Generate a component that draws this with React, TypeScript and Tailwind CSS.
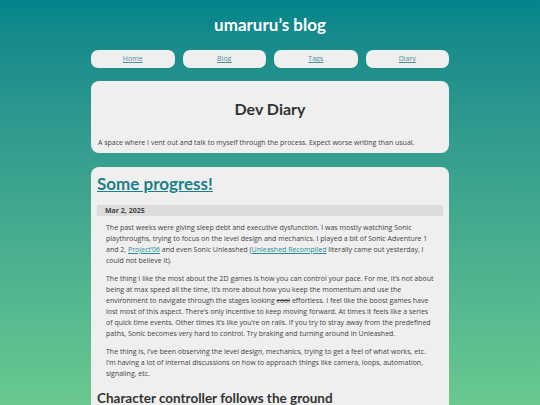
export default function App() {
  const navItems = ['Home', 'Blog', 'Tags', 'Diary'];

  return (
    <div className="min-h-screen bg-fixed bg-gradient-to-b from-[#02848b] to-[#69c98f] font-['Open_Sans',sans-serif] text-[#333] pb-10">
      <header className="pt-[13px] text-center font-['Lato',sans-serif]">
        <h1 className="text-[17px] leading-[24px] font-bold text-white">umaruru’s blog</h1>
      </header>

      <nav className="mx-auto mt-[13px] flex w-[358px] gap-2">
        {navItems.map((item) => (
          <a
            key={item}
            href="#"
            className="flex h-[18px] flex-1 items-center justify-center rounded-[7px] bg-[#efefef] pt-px text-[7px] text-[#4d9199] underline"
          >
            {item}
          </a>
        ))}
      </nav>

      <main className="mx-auto mt-[13px] flex w-[358px] flex-col gap-[14px]">
        <section className="rounded-[8px] bg-[#efefef] px-[7px] pt-[18px] pb-[5px]">
          <h2 className="text-center font-['Lato',sans-serif] text-[16px] leading-[20px] font-bold text-[#333]">Dev Diary</h2>
          <p className="mt-[18px] text-[7px] leading-[11px] text-[#444]">
            A space where I vent out and talk to myself through the process. Expect worse writing than usual.
          </p>
        </section>

        <article className="rounded-[8px] bg-[#efefef] px-[6px] pt-[7px] pb-4">
          <h2 className="font-['Lato',sans-serif] text-[17px] leading-[20px] font-bold">
            <a href="#" className="text-[#1d7f89] underline">Some progress!</a>
          </h2>

          <div className="mt-[11px] h-[11px] bg-[#dcdcdc] px-[8px] text-[7px] leading-[11px] font-bold text-[#444]">
            Mar 2, 2025
          </div>

          <div className="mt-[6px] flex flex-col gap-[7px] px-[9px] text-[7px] leading-[11px] text-[#444]">
            <p>
              The past weeks were giving sleep debt and executive dysfunction. I was mostly watching Sonic playthroughs,
              trying to focus on the level design and mechanics. I played a bit of Sonic Adventure 1 and 2,{' '}
              <a href="#" className="text-[#2a8e99] underline">Project’06</a> and even Sonic Unleashed (
              <a href="#" className="text-[#2a8e99] underline">Unleashed Recompiled</a> literally came out yesterday, I
              could not believe it).
            </p>
            <p>
              The thing I like the most about the 2D games is how you can control your pace. For me, it’s not about being
              at max speed all the time, it’s more about how you keep the momentum and use the environment to navigate
              through the stages looking <span className="line-through">cool</span> effortless. I feel like the boost games
              have lost most of this aspect. There’s only incentive to keep moving forward. At times it feels like a series
              of quick time events. Other times it’s like you’re on rails. If you try to stray away from the predefined
              paths, Sonic becomes very hard to control. Try braking and turning around in Unleashed.
            </p>
            <p>
              The thing is, I’ve been observing the level design, mechanics, trying to get a feel of what works, etc. I’m
              having a lot of internal discussions on how to approach things like camera, loops, automation, signaling,
              etc.
            </p>
          </div>

          <h3 className="mt-[11px] font-['Lato',sans-serif] text-[13.5px] leading-[16px] font-bold text-[#333]">
            Character controller follows the ground
          </h3>
        </article>
      </main>
    </div>
  );
}
